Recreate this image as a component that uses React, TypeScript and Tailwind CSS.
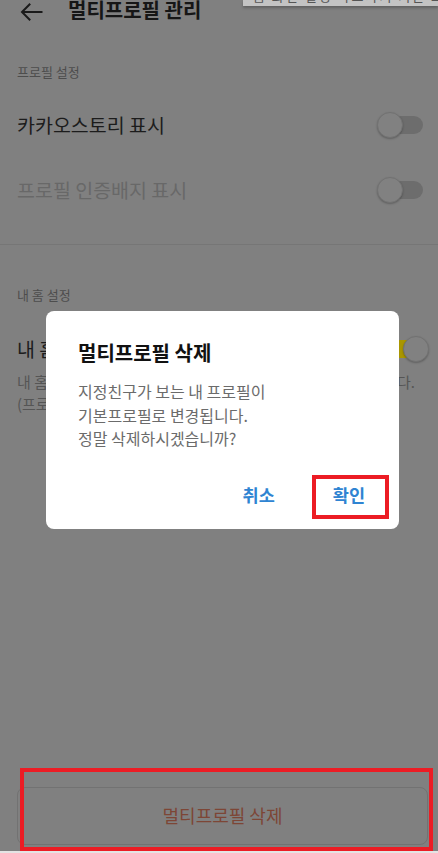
import React from "react";

const font = { fontFamily: '"Noto Sans CJK KR", "Noto Sans", sans-serif' };

function Toggle({ on = false }: { on?: boolean }) {
    if (on) {
        return (
            <div className="relative w-[52px] h-[26px] shrink-0">
                <div className="absolute left-[6px] right-[10px] top-[4px] h-[18px] rounded-full bg-[#a99600]"></div>
                <div className="absolute right-0 top-0 w-[26px] h-[26px] rounded-full bg-[#818181] border border-[#727272] shadow-[0_1px_2px_rgba(0,0,0,0.25)]"></div>
            </div>
        );
    }
    return (
        <div className="relative w-[46px] h-[26px] shrink-0">
            <div className="absolute left-[6px] right-0 top-[4px] h-[18px] rounded-full bg-[#6d6d6d]"></div>
            <div className="absolute left-0 top-0 w-[26px] h-[26px] rounded-full bg-[#818181] border border-[#727272] shadow-[0_1px_2px_rgba(0,0,0,0.25)]"></div>
        </div>
    );
}

export default function App() {
    return (
        <div style={font} className="relative w-[438px] h-[853px] overflow-hidden bg-[#808080]">
            {/* cut-off popup at the top */}
            <div className="absolute top-0 left-[243px] right-0 h-[6px] bg-[#c3c3c3] shadow-[0_2px_3px_rgba(0,0,0,0.25)] overflow-hidden">
                <div className="-mt-[12px] pl-[10px] text-[13px] leading-[16px] text-[#555] whitespace-nowrap tracking-[2px]">
                    홈 화면 설정 바로가기 기본 프로필
                </div>
            </div>

            {/* header */}
            <div className="h-[24px] flex items-center">
                <svg className="ml-[20px] w-[23px] h-[18px]" viewBox="0 0 23 18" fill="none" stroke="#1a1a1a" strokeWidth="2" strokeLinecap="square">
                    <path d="M21.5 9 H2.5 M9.5 1.5 L2 9 L9.5 16.5" />
                </svg>
                <div className="ml-[25px] text-[20px] font-bold text-[#161616] leading-[24px] -mt-[4px]">멀티프로필 관리</div>
            </div>

            {/* 프로필 설정 */}
            <div className="mt-[39px] px-[17px] text-[13px] leading-[18px] text-[#4d4d4d]">프로필 설정</div>
            <div className="mt-[11px] h-[65px] flex items-center justify-between pl-[17px] pr-[15px]">
                <div className="text-[19.5px] text-[#1c1c1c] leading-[26px]">카카오스토리 표시</div>
                <Toggle />
            </div>
            <div className="h-[65px] flex items-center justify-between pl-[17px] pr-[15px]">
                <div className="text-[19.5px] text-[#686868] leading-[26px]">프로필 인증배지 표시</div>
                <Toggle />
            </div>
            <div className="mt-[22px] h-px bg-[#767676]"></div>

            {/* 내 홈 설정 */}
            <div className="mt-[41px] px-[17px] text-[13px] leading-[18px] text-[#4d4d4d]">내 홈 설정</div>
            <div className="mt-[32px] flex items-center justify-between pl-[17px] pr-[9px]">
                <div className="text-[19.5px] text-[#1c1c1c] leading-[26px]">내 홈 공개 설정</div>
                <Toggle on />
            </div>
            <div className="mt-[9px] px-[17px] text-[15px] leading-[22px] text-[#555]">
                <div className="flex justify-between pr-[6px] whitespace-nowrap">
                    <span>내 홈을 켜면 지정친구가 나의 멀티프로필 홈을</span>
                    <span>볼 수 있습니다.</span>
                </div>
                <div className="whitespace-nowrap">(프로필 홈에서 게시물을 확인할 수 있어요)</div>
            </div>

            {/* bottom delete button */}
            <div className="absolute left-[17px] right-[10px] top-[787px] h-[58px] rounded-lg border border-[#727272] flex items-center justify-center">
                <span className="text-[18px] text-[#7d4636] -mt-[2px]">멀티프로필 삭제</span>
            </div>
            <div className="absolute left-[20px] right-[5px] top-[768px] h-[83px] border-4 border-[#ec1c24]"></div>
            <div className="absolute left-0 right-0 bottom-0 h-[2px] bg-[#e4e4e4]"></div>

            {/* dialog */}
            <div className="absolute left-[46px] top-[311px] w-[353px] h-[218px] rounded-lg bg-white pl-[32px] pt-[28px]">
                <div className="text-[20px] font-bold leading-[28px] text-[#111]">멀티프로필 삭제</div>
                <div className="mt-[13px] text-[16px] leading-[23.5px] text-[#6b6b6b]">
                    <div>지정친구가 보는 내 프로필이</div>
                    <div>기본프로필로 변경됩니다.</div>
                    <div>정말 삭제하시겠습니까?</div>
                </div>
                <div className="mt-[32px] flex justify-end pr-[34px] gap-[58px] text-[17.5px] font-bold leading-[24px] text-[#2f84d2]">
                    <span>취소</span>
                    <span>확인</span>
                </div>
                <div className="absolute left-[266px] top-[164px] w-[77px] h-[44px] border-4 border-[#ec1c24]"></div>
            </div>
        </div>
    );
}
